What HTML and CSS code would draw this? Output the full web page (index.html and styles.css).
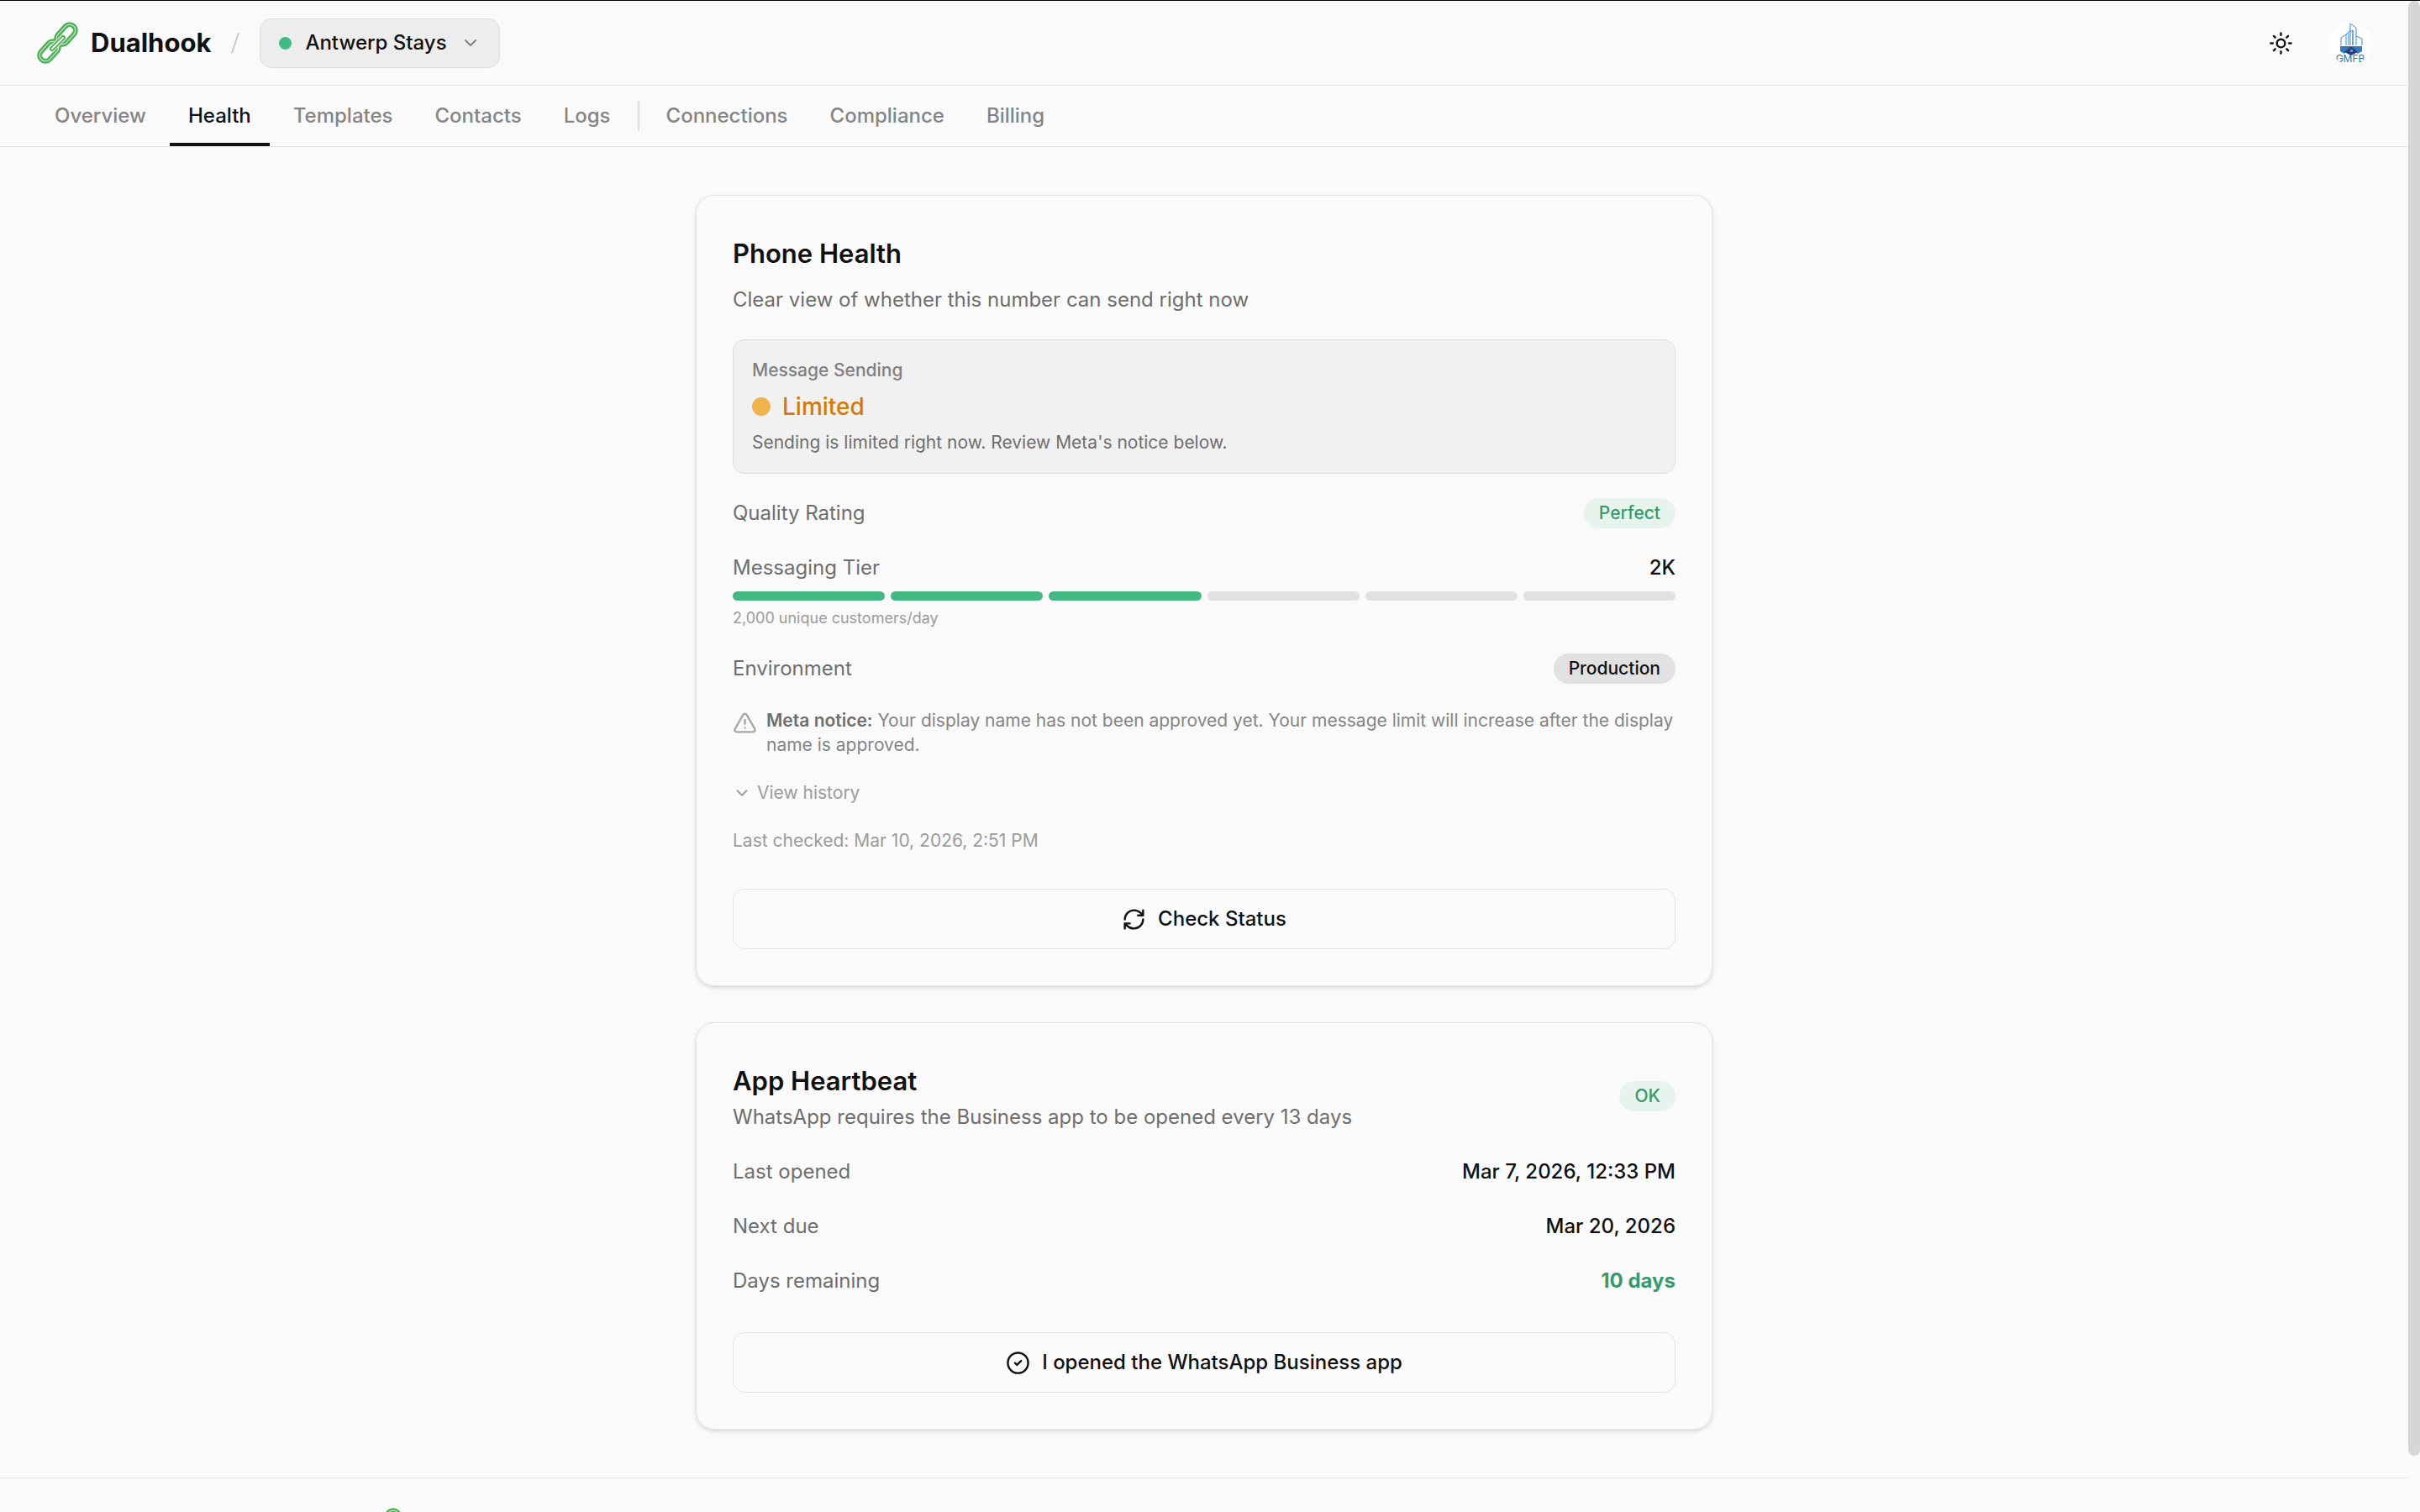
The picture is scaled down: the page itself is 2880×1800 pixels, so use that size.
FILE: index.html
```
<!DOCTYPE html>
<html lang="en">
<head>
    <meta charset="UTF-8">
    <meta name="viewport" content="width=device-width, initial-scale=1.0">
    <title>Health - Dualhook</title>
    <link rel="stylesheet" href="styles.css">
</head>
<body>
    <!-- Logo shared by the header and the footer -->
    <svg class="sprite" aria-hidden="true">
        <symbol id="logo" viewBox="3 3 50 50">
            <g fill="none">
                <rect x="25" y="11" width="27" height="14" rx="7" transform="rotate(-48 38.500 18)" stroke="#52b05a" stroke-width="6"/>
                <rect x="25" y="11" width="27" height="14" rx="7" transform="rotate(-48 38.500 18)" stroke="#d9f0da" stroke-width="1"/>
                <rect x="5" y="31" width="27" height="14" rx="7" transform="rotate(-48 18.500 38)" stroke="#52b05a" stroke-width="6"/>
                <rect x="5" y="31" width="27" height="14" rx="7" transform="rotate(-48 18.500 38)" stroke="#d9f0da" stroke-width="1"/>
                <path d="M22 35 35 22" stroke="#e8f6e8" stroke-width="8" stroke-linecap="round"/>
                <path d="M22 35 35 22" stroke="#52b05a" stroke-width="6" stroke-linecap="round"/>
                <path d="M22 35 35 22" stroke="#e8f6e8" stroke-width="2" stroke-linecap="round"/>
            </g>
        </symbol>
    </svg>

    <div class="window">
        <div class="page">
            <header class="header">
                <a href="#" class="brand">
                    <svg class="brand-logo"><use href="#logo"/></svg>
                    <span>Dualhook</span>
                </a>
                <svg class="slash" viewBox="0 0 12 26"><path d="M2 25 10 1"/></svg>
                <button type="button" class="switcher">
                    <span class="switcher-dot"></span>
                    Antwerp Stays
                    <svg class="icon icon-chevron" viewBox="0 0 24 24"><path d="m6 9 6 6 6-6"/></svg>
                </button>
                <div class="header-actions">
                    <button type="button" class="theme-button" aria-label="Toggle theme">
                        <svg class="icon" viewBox="0 0 24 24"><circle cx="12" cy="12" r="4"/><path d="M12 2v2M12 20v2M4.930 4.930l1.410 1.410M17.660 17.660l1.410 1.410M2 12h2M20 12h2M6.340 17.660l-1.410 1.410M19.070 4.930l-1.410 1.410"/></svg>
                    </button>
                    <button type="button" class="avatar" aria-label="Account">
                        <svg viewBox="0 0 51 51">
                            <g fill="none" stroke="#3f8bcb" stroke-width="1">
                                <path d="M14 28V19l6-4v13M20 15l5-5v18M23 13v15M28 28V10l-3 2M25 10V2l7 5v21M32 17l7 3v8M28 10v18"/>
                            </g>
                            <path d="M13 29h26v6l-5 3-8-9-8 9-5-3z" fill="#3279be"/>
                            <path d="m26 29 8 7-8 4-8-4z" fill="#24417f"/>
                            <path d="M25 33h3v3h-3z" fill="#7b8fc0"/>
                            <text x="25" y="48">GMFB</text>
                        </svg>
                    </button>
                </div>
            </header>

            <nav class="tabs">
                <a href="#">Overview</a>
                <a href="#" class="active" aria-current="page">Health</a>
                <a href="#">Templates</a>
                <a href="#">Contacts</a>
                <a href="#">Logs</a>
                <span class="tabs-divider"></span>
                <a href="#">Connections</a>
                <a href="#">Compliance</a>
                <a href="#">Billing</a>
            </nav>

            <main class="main">
                <section class="card">
                    <h2>Phone Health</h2>
                    <p class="description">Clear view of whether this number can send right now</p>

                    <div class="status-box">
                        <p class="status-label">Message Sending</p>
                        <p class="status-value"><span class="status-dot"></span>Limited</p>
                        <p class="status-text">Sending is limited right now. Review Meta's notice below.</p>
                    </div>

                    <div class="row">
                        <span>Quality Rating</span>
                        <span class="badge badge-green">Perfect</span>
                    </div>

                    <div class="tier">
                        <div class="row">
                            <span>Messaging Tier</span>
                            <strong>2K</strong>
                        </div>
                        <div class="tier-bars">
                            <span class="filled"></span>
                            <span class="filled"></span>
                            <span class="filled"></span>
                            <span></span>
                            <span></span>
                            <span></span>
                        </div>
                        <p class="tier-note">2,000 unique customers/day</p>
                    </div>

                    <div class="row">
                        <span>Environment</span>
                        <span class="badge">Production</span>
                    </div>

                    <div class="notice">
                        <svg class="icon icon-notice" viewBox="0 0 24 24"><path d="m21.730 18-8-14a2 2 0 0 0-3.480 0l-8 14A2 2 0 0 0 4 21h16a2 2 0 0 0 1.730-3M12 9v4M12 17h.01"/></svg>
                        <p><b>Meta notice:</b> Your display name has not been approved yet. Your message limit will increase after the display name is approved.</p>
                    </div>

                    <button type="button" class="history-button">
                        <svg class="icon icon-chevron" viewBox="0 0 24 24"><path d="m6 9 6 6 6-6"/></svg>
                        View history
                    </button>

                    <p class="last-checked">Last checked: Mar 10, 2026, 2:51 PM</p>

                    <button type="button" class="action-button">
                        <svg class="icon" viewBox="0 0 24 24"><path d="M3 12a9 9 0 0 1 9-9 9.750 9.750 0 0 1 6.740 2.740L21 8M21 3v5h-5M21 12a9 9 0 0 1-9 9 9.750 9.750 0 0 1-6.740-2.740L3 16M8 16H3v5"/></svg>
                        Check Status
                    </button>
                </section>

                <section class="card">
                    <div class="card-header">
                        <div>
                            <h2>App Heartbeat</h2>
                            <p class="description">WhatsApp requires the Business app to be opened every 13 days</p>
                        </div>
                        <span class="badge badge-green">OK</span>
                    </div>

                    <div class="row">
                        <span>Last opened</span>
                        <strong>Mar 7, 2026, 12:33 PM</strong>
                    </div>
                    <div class="row">
                        <span>Next due</span>
                        <strong>Mar 20, 2026</strong>
                    </div>
                    <div class="row">
                        <span>Days remaining</span>
                        <strong class="days">10 days</strong>
                    </div>

                    <button type="button" class="action-button">
                        <svg class="icon" viewBox="0 0 24 24"><circle cx="12" cy="12" r="10"/><path d="m9 12 2 2 4-4"/></svg>
                        I opened the WhatsApp Business app
                    </button>
                </section>
            </main>

            <footer class="footer">
                <div class="footer-inner">
                    <svg class="brand-logo"><use href="#logo"/></svg>
                </div>
            </footer>
        </div>
        <div class="scrollbar"><div class="scrollbar-thumb"></div></div>
    </div>
</body>
</html>
```
FILE: styles.css
```
* {
    box-sizing: border-box;
}

body {
    margin: 0;
    background-color: #fafafa;
    color: #111;
    font-family: Inter, "Liberation Sans", sans-serif;
    font-size: 24px;
    line-height: 36px;
}

h2, p {
    margin: 0;
}

button {
    font: inherit;
    color: inherit;
    background: none;
    border: none;
    padding: 0;
    cursor: pointer;
}

a {
    color: inherit;
    text-decoration: none;
}

.sprite {
    display: none;
}

.window {
    display: flex;
    height: 100vh;
    overflow: hidden;
    border-top: 1px solid #000;
}

.page {
    flex: 1;
    min-width: 0;
}

.scrollbar {
    width: 14px;
    flex-shrink: 0;
}

.scrollbar-thumb {
    height: 96.3%;
    border-radius: 7px;
    background-color: #d6d6d6;
}

.icon {
    width: 29px;
    height: 29px;
    flex-shrink: 0;
    fill: none;
    stroke: currentColor;
    stroke-width: 2;
    stroke-linecap: round;
    stroke-linejoin: round;
}

.icon-chevron {
    width: 24px;
    height: 24px;
}

/* Header */
.header {
    display: flex;
    align-items: center;
    height: 101px;
    padding: 0 43px;
    border-bottom: 1px solid #e5e5e5;
}

.brand {
    display: flex;
    align-items: center;
    gap: 15px;
    font-size: 31px;
    font-weight: 700;
}

.brand-logo {
    width: 50px;
    height: 50px;
}

.slash {
    width: 12px;
    height: 26px;
    margin: 0 23px;
    fill: none;
    stroke: #c8c8c8;
    stroke-width: 2;
}

.switcher {
    display: flex;
    align-items: center;
    gap: 16px;
    height: 59px;
    padding: 0 22px;
    border: 1px solid #dcdcdc;
    border-radius: 14px;
    background-color: #ededed;
    font-weight: 500;
}

.switcher-dot {
    width: 15px;
    height: 15px;
    border-radius: 50%;
    background-color: #45b983;
}

.switcher .icon {
    color: #808080;
}

.header-actions {
    display: flex;
    align-items: center;
    gap: 43px;
    margin-left: auto;
}

.theme-button {
    display: flex;
}

.avatar {
    width: 51px;
    height: 51px;
    border-radius: 50%;
    background-color: #fff;
    overflow: hidden;
}

.avatar svg {
    display: block;
}

.avatar text {
    fill: #34789c;
    font-size: 12px;
    text-anchor: middle;
}

/* Tabs */
.tabs {
    display: flex;
    align-items: center;
    gap: 6px;
    padding: 0 43px;
    border-bottom: 1px solid #e5e5e5;
    color: #858585;
    font-weight: 500;
}

.tabs a {
    padding: 18px 22px 14px;
    border-bottom: 4px solid transparent;
}

.tabs a.active {
    color: #111;
    border-bottom-color: #111;
}

.tabs-divider {
    width: 2px;
    height: 36px;
    margin: 0 4px;
    background-color: #e1e1e1;
}

/* Cards */
.main {
    display: flex;
    flex-direction: column;
    gap: 43px;
    max-width: 1210px;
    margin: 0 auto;
    padding: 57px 0;
}

.card {
    display: flex;
    flex-direction: column;
    gap: 29px;
    padding: 43px;
    border: 1px solid #e4e4e4;
    border-radius: 22px;
    box-shadow: 0 2px 5px rgba(0, 0, 0, 0.14);
}

.card h2 {
    font-size: 31px;
    line-height: 51px;
    font-weight: 600;
}

.description {
    color: #6e6e6e;
}

.card > .description {
    margin-top: -17px;
}

.card-header {
    display: flex;
    align-items: center;
    justify-content: space-between;
}

.status-box {
    display: flex;
    flex-direction: column;
    gap: 11px;
    padding: 22px;
    border: 1px solid #dedede;
    border-radius: 14px;
    background-color: #f1f1f1;
    font-size: 21px;
    line-height: 28px;
}

.status-label {
    color: #808080;
    font-weight: 500;
}

.status-value {
    display: flex;
    align-items: center;
    gap: 14px;
    color: #d47a0a;
    font-size: 28px;
    line-height: 36px;
    font-weight: 500;
}

.status-dot {
    width: 22px;
    height: 22px;
    border-radius: 50%;
    background-color: #f0b44a;
}

.status-text {
    color: #6e6e6e;
}

.row {
    display: flex;
    align-items: center;
    justify-content: space-between;
    color: #6e6e6e;
}

.row strong {
    color: #111;
    font-weight: 500;
}

.row .days {
    color: #38996b;
    font-weight: 700;
}

.badge {
    padding: 0 18px;
    border-radius: 18px;
    background-color: #e1e1e1;
    color: #111;
    font-size: 21px;
    font-weight: 500;
}

.badge-green {
    background-color: #e7f4ed;
    color: #38996b;
}

.tier-bars {
    display: grid;
    grid-template-columns: repeat(6, 1fr);
    gap: 7px;
    margin: 10px 0 7px;
}

.tier-bars span {
    height: 11px;
    border-radius: 6px;
    background-color: #e1e1e1;
}

.tier-bars .filled {
    background-color: #45b983;
}

.tier-note {
    color: #9c9c9c;
    font-size: 18px;
    line-height: 27px;
}

.notice {
    display: flex;
    gap: 11px;
    color: #858585;
    font-size: 21px;
    line-height: 29px;
}

.notice b {
    color: #6e6e6e;
    font-weight: 600;
}

.icon-notice {
    margin-top: 3px;
    color: #a8a8a8;
}

.history-button {
    display: flex;
    align-items: center;
    align-self: flex-start;
    gap: 7px;
    color: #9c9c9c;
    font-size: 21px;
    line-height: 28px;
}

.history-button .icon {
    width: 22px;
    height: 22px;
}

.last-checked {
    color: #9c9c9c;
    font-size: 21px;
    line-height: 28px;
}

.action-button {
    display: flex;
    align-items: center;
    justify-content: center;
    gap: 14px;
    height: 72px;
    margin-top: 14px;
    border: 1px solid #e5e5e5;
    border-radius: 14px;
    font-weight: 500;
}

/* Footer */
.footer {
    border-top: 1px solid #e5e5e5;
}

.footer-inner {
    max-width: 2010px;
    margin: 0 auto;
    padding: 35px 0;
}
```
